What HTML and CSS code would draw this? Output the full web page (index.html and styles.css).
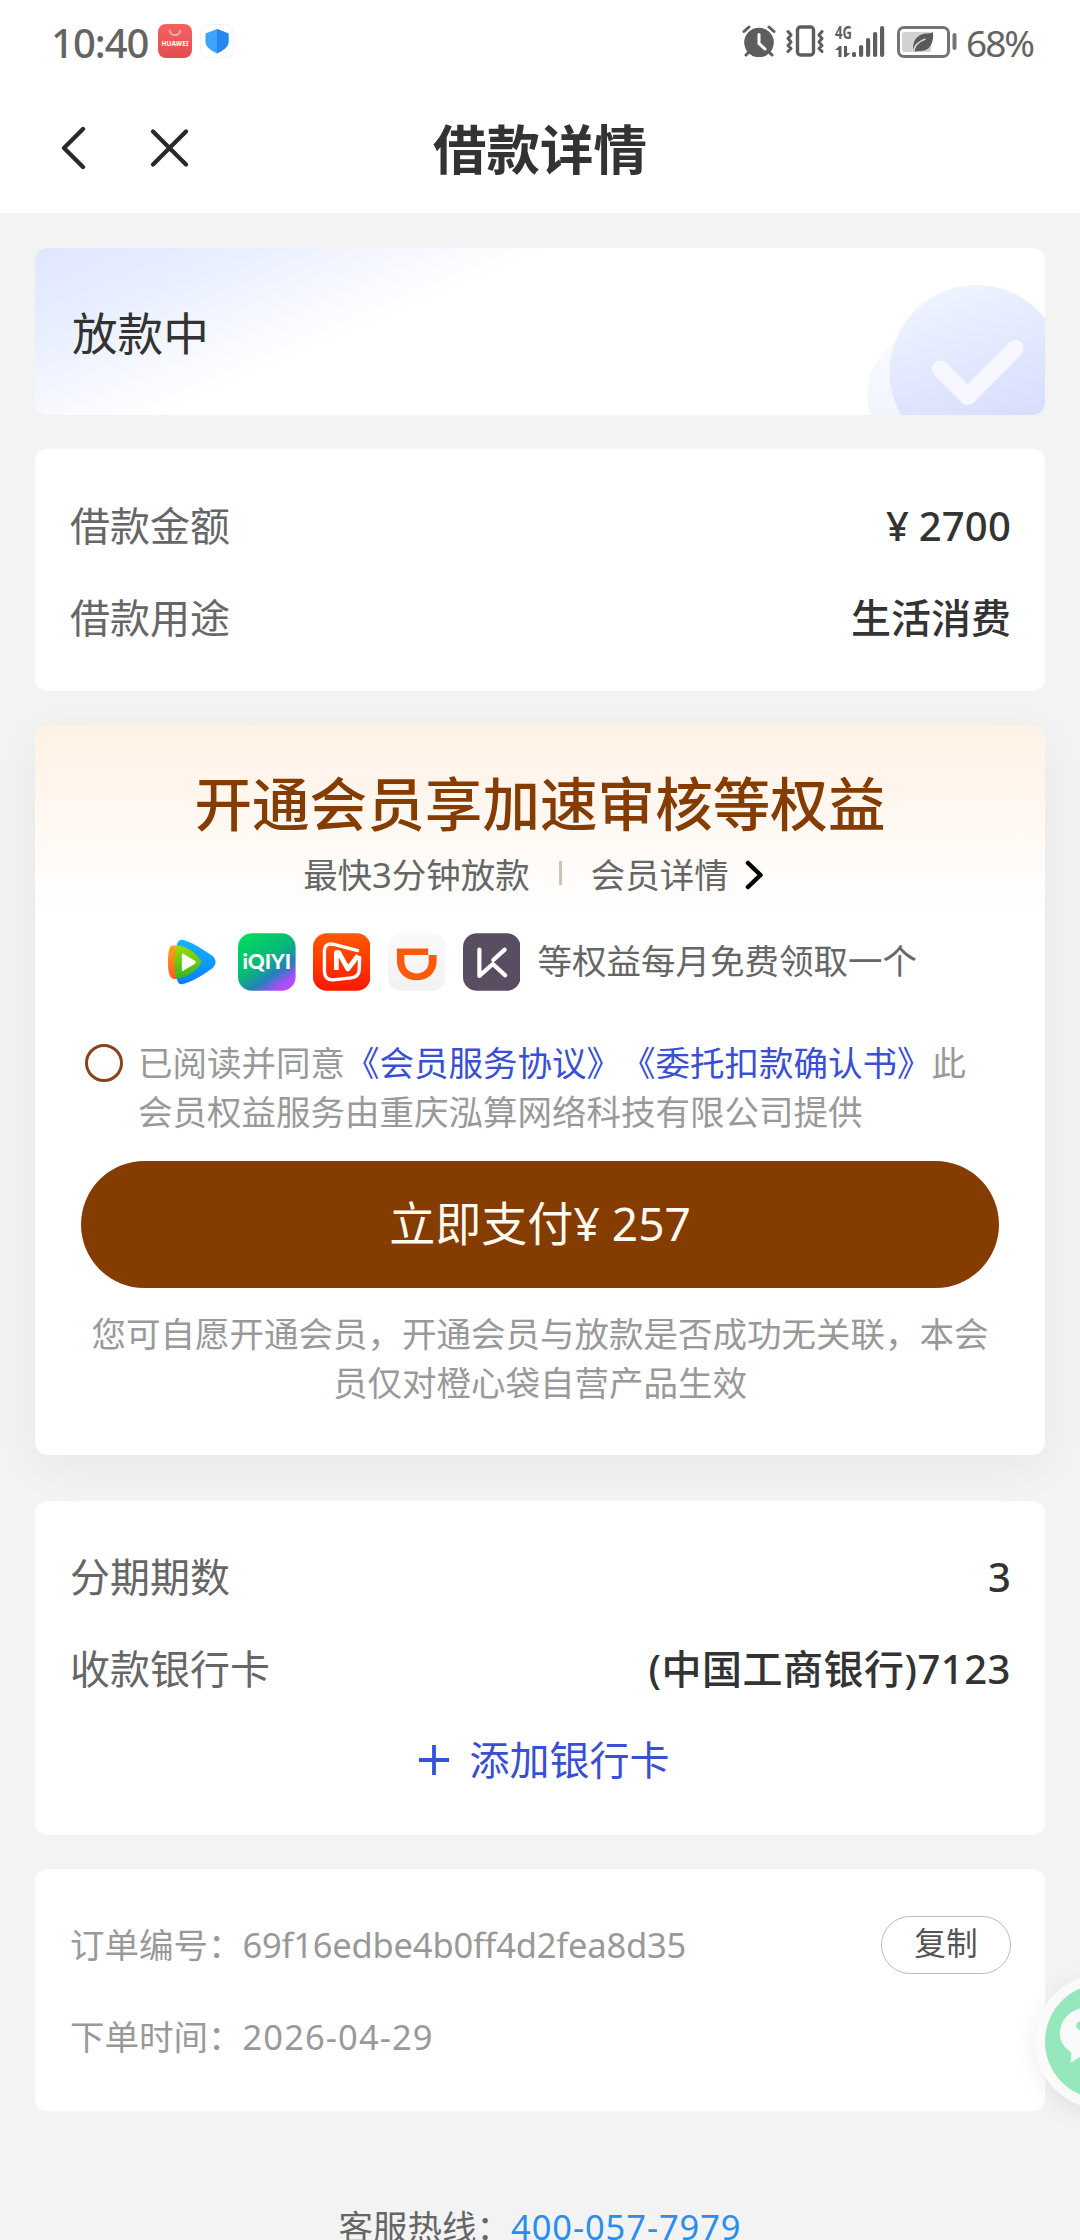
FILE: index.html
```html
<!DOCTYPE html>
<html lang="zh-CN">
<head>
<meta charset="utf-8">
<title>借款详情</title>
<link rel="stylesheet" href="styles.css">
</head>
<body>
<header class="header">
  <div class="status">
    <div class="status-left">
      <span class="time">10:40</span>
      <svg class="app-badge" viewBox="0 0 34 34">
        <defs><linearGradient id="hw" x1="0" y1="0" x2="0" y2="1"><stop offset="0" stop-color="#f4625f"/><stop offset="1" stop-color="#e54b50"/></linearGradient></defs>
        <rect width="34" height="34" rx="8" fill="url(#hw)"/>
        <path d="M11.5 6.5a5.6 5.6 0 0 0 11 0" fill="none" stroke="#fbb" stroke-width="1.4" stroke-linecap="round"/>
        <text class="badge-text" x="17" y="22" text-anchor="middle" textLength="27">HUAWEI</text>
      </svg>
      <svg class="app-badge" viewBox="0 0 34 34">
        <rect x=".5" y=".5" width="33" height="33" rx="8" fill="#fff" stroke="#f1f3f5"/>
        <path d="M17 5l11.500 4.500v8.500c0 5-5.500 8.500-11.500 11.500C11 26.500 5.500 23 5.500 18V9.500z" fill="#3da3fb"/>
        <path d="M17 5l11.500 4.500v8.500c0 5-5.500 8.500-11.500 11.500z" fill="#2687ee"/>
      </svg>
    </div>
    <div class="status-right">
      <svg class="i-alarm" viewBox="0 0 34 32" fill="none" stroke="#5e5e5e" stroke-width="3" stroke-linecap="round">
        <circle cx="17" cy="17.500" r="14.800" fill="#5e5e5e" stroke="none"/>
        <path d="M2 6.500l5-4.500M32 6.500L27 2M7 27l-3 3M27 27l3 3"/>
        <path d="M17 9.500v9l6 5.500" stroke="#fff"/>
      </svg>
      <svg class="i-vibrate" viewBox="0 0 38 32" fill="none" stroke="#5e5e5e" stroke-width="3.400" stroke-linecap="round" stroke-linejoin="round">
        <rect x="11.500" y="2" width="16" height="28" rx="3"/>
        <path d="M2 6.500l3 3.500-3 3.500 3 3.500-3 3.500 3 3-3 3M36 6.500l-3 3.500 3 3.500-3 3.500 3 3.500-3 3 3 3" stroke-width="3"/>
      </svg>
      <svg class="i-signal" viewBox="0 0 50 32" fill="#5e5e5e">
        <text class="net-text" x="0" y="14" textLength="17" lengthAdjust="spacingAndGlyphs">4G</text>
        <path d="M0 25l4.500-4h2v11h-3v-7zM9 21h3v7h3.500L11 32H9z"/>
        <rect x="17" y="27" width="4" height="5" rx="1.500"/><rect x="24" y="20" width="4.200" height="12" rx="2"/><rect x="31" y="13" width="4.200" height="19" rx="2"/><rect x="38" y="7" width="4.200" height="25" rx="2"/><rect x="45" y="1" width="4.200" height="31" rx="2"/>
      </svg>
      <svg class="i-battery" viewBox="0 0 60 32">
        <rect x="1.500" y="1.500" width="50" height="29" rx="5.500" fill="none" stroke="#747474" stroke-width="3"/>
        <rect x="5" y="6" width="29" height="20" rx="2" fill="#d2d2d2"/>
        <rect x="55.500" y="7" width="4" height="17" rx="2" fill="#747474"/>
        <path d="M36 6c1 10-3 19-12 19-3 0-5 .5-7 .5C14 15 21 8 29 7.500 32 7.500 34 7 36 6z" fill="#5a5a5a"/>
        <path d="M16.500 26c1-7 6-11 12-13" fill="none" stroke="#d8d8d8" stroke-width="1.700"/>
      </svg>
      <span class="percent">68%</span>
    </div>
  </div>
  <nav class="nav">
    <svg class="nav-icons" viewBox="0 0 130 44" fill="none" stroke="#292929" stroke-width="4.300" stroke-linecap="round" stroke-linejoin="round">
      <path d="M23 3L4 22l19 19"/><path d="M93 5.500l33 33M126 5.500l-33 33"/>
    </svg>
    <h1 class="nav-title">借款详情</h1>
  </nav>
</header>

<main class="main">
  <section class="card banner">
    <span class="banner-text">放款中</span>
    <svg class="banner-art" viewBox="830 0 180 167">
      <defs>
        <linearGradient id="big" x1=".3" y1="0" x2=".65" y2="1"><stop offset="0" stop-color="#eef4ff"/><stop offset=".8" stop-color="#d9defe"/></linearGradient>
        <linearGradient id="small" x1="0" y1="0" x2="0" y2="1"><stop offset="0" stop-color="#fafbff"/><stop offset="1" stop-color="#eef1ff"/></linearGradient>
      </defs>
      <circle cx="895" cy="147" r="63" fill="url(#small)"/>
      <circle cx="941.600" cy="124" r="87" fill="url(#big)"/>
      <path d="M905.500 121l27.200 27.500 47.500-48" fill="none" stroke="#f7f8ff" stroke-width="17" stroke-linecap="round" stroke-linejoin="round"/>
    </svg>
  </section>

  <section class="card rows">
    <div class="row"><span class="label">借款金额</span><span class="value amount">¥ 2700</span></div>
    <div class="row"><span class="label">借款用途</span><span class="value">生活消费</span></div>
  </section>

  <section class="card vip">
    <h2 class="vip-title">开通会员享加速审核等权益</h2>
    <div class="vip-sub">
      <span>最快3分钟放款</span>
      <i class="divider"></i>
      <span>会员详情</span>
      <svg class="chevron" viewBox="0 0 20 30"><path d="M3 3l12.500 12L3 27" fill="none" stroke="#000" stroke-width="4.500" stroke-linecap="round" stroke-linejoin="round"/></svg>
    </div>
    <div class="apps">
      <svg class="app" viewBox="0 0 58 58">
        <defs>
          <linearGradient id="vb" x1="0" y1="0" x2="0" y2="1"><stop offset="0" stop-color="#15b7ff"/><stop offset="1" stop-color="#0a7dff"/></linearGradient>
          <linearGradient id="vg" x1="0" y1="0" x2="0" y2="1"><stop offset="0" stop-color="#a0da00"/><stop offset="1" stop-color="#35b51c"/></linearGradient>
          <linearGradient id="vo" x1="0" y1="0" x2="0" y2="1"><stop offset="0" stop-color="#ffa51f"/><stop offset="1" stop-color="#ff5a1c"/></linearGradient>
        </defs>
        <path d="M9 12.500h8v33.500h-6c-5 0-6-9-6-17S6 13 9 12.500z" fill="url(#vo)"/>
        <path d="M14 12c1-6 5-6 9-4.500 9 3 18 9 27 15.500 4 4 4 8 0 12-9 7-18 12-27 15.500-4 1.500-8 1.500-9-4.500z" fill="url(#vb)"/>
        <path d="M13.500 12.500c8 0 16 5 23 12.500 2.500 2.500 2.500 5.500 0 8-7 7.500-15 12.500-23 12.500-2.500-8-2.500-25 0-33z" fill="url(#vg)"/>
        <path d="M19 21.500q0-1.500 1.500-.7l12 7.200q1.500 1.200 0 2.400l-12 7.500q-1.500.8-1.500-.7z" fill="#fff"/>
      </svg>
      <svg class="app" viewBox="0 0 58 58">
        <defs><linearGradient id="iq" x1=".2" y1="0" x2=".9" y2="1"><stop offset="0" stop-color="#00d95f"/><stop offset=".45" stop-color="#08b778"/><stop offset=".68" stop-color="#2580bb"/><stop offset=".85" stop-color="#a052f5"/><stop offset="1" stop-color="#c648ff"/></linearGradient></defs>
        <rect width="58" height="58" rx="14" fill="url(#iq)"/>
        <text class="iqiyi-text" x="4.500" y="36.500" textLength="49" lengthAdjust="spacingAndGlyphs">iQIYI</text>
      </svg>
      <svg class="app" viewBox="0 0 58 58">
        <defs><linearGradient id="mg" x1="0" y1="0" x2="0" y2="1"><stop offset="0" stop-color="#ff5a00"/><stop offset="1" stop-color="#ff1700"/></linearGradient></defs>
        <rect width="58" height="58" rx="14" fill="url(#mg)"/>
        <g fill="none" stroke="#fff" stroke-linecap="round" stroke-linejoin="round">
          <path d="M45 17.500L22 11.500q-10-2.500-10.500 6v21q.5 9 9 8.500l18-2q7.500-1 8-7.500l.5-13" stroke-width="3.400"/>
          <path d="M23.500 37V19.500h2.500L35 36l10.500-13.500" stroke-width="4.800" stroke-linecap="butt"/>
        </g>
      </svg>
      <svg class="app" viewBox="0 0 58 58">
        <defs><linearGradient id="dd" x1="0" y1="0" x2="0" y2="1"><stop offset="0" stop-color="#fafafa"/><stop offset="1" stop-color="#f1f1f1"/></linearGradient></defs>
        <rect width="58" height="58" rx="14" fill="url(#dd)"/>
        <path fill-rule="evenodd" d="M9 15.500h31.500v6.500h8.500v6c0 12-9 19.500-20 19.500S9 40 9 28zM16.500 22v6c0 8 6 12.500 12.500 12.500S41 36 41 29v-7z" fill="#fc5b0c"/>
      </svg>
      <svg class="app" viewBox="0 0 58 58">
        <rect width="58" height="58" rx="14" fill="#594d61"/>
        <path d="M16.500 16.500v26.500l13.500-12L42.500 42.500M42 16.500L30.500 27" fill="none" stroke="#fff" stroke-width="4.200" stroke-linecap="round" stroke-linejoin="round"/>
      </svg>
      <span class="apps-text">等权益每月免费领取一个</span>
    </div>
    <div class="agree">
      <i class="radio"></i>
      <p class="agree-text">已阅读并同意<a class="link">《会员服务协议》</a><a class="link">《委托扣款确认书》</a>此会员权益服务由重庆泓算网络科技有限公司提供</p>
    </div>
    <button class="pay">立即支付¥ 257</button>
    <p class="notice">您可自愿开通会员，开通会员与放款是否成功无关联，本会员仅对橙心袋自营产品生效</p>
  </section>

  <section class="card rows bank">
    <div class="row"><span class="label">分期期数</span><span class="value">3</span></div>
    <div class="row"><span class="label">收款银行卡</span><span class="value account">(中国工商银行)7123</span></div>
    <div class="row add">
      <svg class="plus" viewBox="0 0 32 32"><path d="M16 1v30M1 16h30" stroke="#3350e0" stroke-width="3.800"/></svg>
      <span>添加银行卡</span>
    </div>
  </section>

  <section class="card rows order">
    <div class="row"><span>订单编号：<span class="order-id">69f16edbe4b0ff4d2fea8d35</span></span><button class="copy">复制</button></div>
    <div class="row"><span>下单时间：<span class="date">2026-04-29</span></span></div>
  </section>

  <footer class="hotline">客服热线：<a class="phone">400-057-7979</a></footer>
</main>

<div class="float-layer">
  <div class="float">
    <svg class="float-icon" viewBox="0 0 116 116">
      <circle cx="58" cy="58" r="58" fill="#94e8bb"/>
      <path d="M46 23c-18 0-31 12-31 27 0 8 4.500 14.500 11.500 19l-.5 10.500 11-7c20 4 40-6 40-22.500S64 23 46 23z" fill="#f8faf9"/>
      <circle cx="36" cy="42" r="4.500" fill="#94e8bb"/><circle cx="57" cy="42" r="4.500" fill="#94e8bb"/>
    </svg>
  </div>
</div>
</body>
</html>
```

FILE: styles.css
```css
* { box-sizing: border-box; margin: 0; padding: 0; }

html { overflow: hidden; }

body {
  position: relative;
  width: 1080px;
  height: 2240px;
  overflow: hidden;
  background: #f3f3f3;
  color: #333;
  font-family: "Noto Sans", "Noto Sans CJK SC", sans-serif;
  font-size: 34.5px;
  text-spacing-trim: space-all;
}

svg { display: block; flex: none; }
button { font: inherit; border: 0; }

/* status bar and navigation */
.header { height: 213px; background: #fff; }
.status {
  display: flex;
  justify-content: space-between;
  height: 82px;
  padding: 0 46px 0 51px;
  color: #646464;
}
.status-left, .status-right { display: flex; align-items: center; }
.time { width: 107px; font-size: 40px; font-weight: 500; letter-spacing: -1px; line-height: 82px; padding-top: 3px; }
.app-badge { width: 34px; height: 34px; margin-right: 8px; }
.badge-text { font: 700 6.5px "Noto Sans", sans-serif; fill: #fff; }
.i-alarm { width: 34px; height: 32px; margin-right: 10px; }
.i-vibrate { width: 38px; height: 32px; margin-right: 11px; }
.i-signal { width: 50px; height: 32px; margin-right: 12px; }
.i-battery { width: 60px; height: 32px; margin: 2px 9px 0 0; }
.net-text { font: 700 18px "Noto Sans", sans-serif; }
.percent { width: 68px; font-size: 37px; letter-spacing: -2px; line-height: 82px; padding-top: 3px; }

.nav {
  display: grid;
  grid-template-columns: 1fr auto 1fr;
  align-items: center;
  height: 131px;
}
.nav-icons { width: 130px; height: 44px; margin-left: 60px; }
.nav-title { font-size: 53.5px; font-weight: 700; line-height: 80px; padding-top: 4px; }

/* page */
.main { display: flex; flex-direction: column; gap: 34px; padding: 35px 35px 0; }
.card { flex: none; border-radius: 12px; background: #fff; }

.banner {
  display: flex;
  align-items: center;
  justify-content: space-between;
  height: 167px;
  padding-left: 37px;
  overflow: hidden;
  background: linear-gradient(157deg, #dfe6ff 0, #e9efff 85px, #f8f9ff 155px, #fff 205px);
  font-size: 45.6px;
}
.banner-text { padding-bottom: 2px; }
.banner-art { width: 180px; height: 167px; }

.rows { padding: 31px 34px 27px 35px; font-size: 40px; }
.bank, .order { padding-top: 30px; padding-bottom: 28px; }
.row { display: flex; align-items: center; justify-content: space-between; height: 92px; line-height: 92px; }
.label { color: #666; }
.value { font-weight: 500; }
.amount { letter-spacing: 0.2px; word-spacing: -1px; }
.account { letter-spacing: 0.5px; }

/* membership */
.vip {
  height: 730px;
  padding: 39px 46px 48px;
  background: linear-gradient(#fff1e5 0, #fff 190px) #fff;
  box-shadow: 0 12px 46px rgba(20, 40, 80, 0.05);
  text-align: center;
}
.vip-title { font-size: 57.6px; font-weight: 500; line-height: 80px; color: #853c00; }
.vip-sub { display: flex; justify-content: center; align-items: center; height: 50px; margin-top: 4px; padding-right: 12px; color: #666; }
.divider { width: 3px; height: 24px; margin: 0 29px; background: #d3c0b0; }
.chevron { width: 20px; height: 30px; margin: 3px 0 0 16px; }
.apps { display: flex; justify-content: center; align-items: center; gap: 17.28px; height: 58px; margin-top: 35px; color: #666; }
.app { width: 57.6px; height: 58px; }
.iqiyi-text { font: 900 20px Lato, sans-serif; fill: #fff; }
.apps-text { padding-bottom: 6px; }
.agree { display: flex; gap: 15px; margin-top: 47px; padding-left: 4px; line-height: 49px; color: #999; text-align: left; }
.radio { flex: none; width: 38px; height: 38px; margin-top: 6px; border: 3px solid #8a441c; border-radius: 50%; }
.agree-text { width: 850px; }
.link { color: #3a4fd2; }
.pay {
  display: block;
  width: 918px;
  height: 127px;
  margin-top: 25px;
  padding-bottom: 6px;
  border-radius: 64px;
  background: #853c00;
  color: #fffaf0;
  font-size: 46.08px;
}
.notice { margin-top: 21px; line-height: 49px; color: #999; }

.main .bank { margin-top: 12px; }
.add { justify-content: center; gap: 20px; padding: 0 0 3px 6px; line-height: 88px; color: #3a4fd2; }
.plus { width: 32px; height: 32px; }

.order { color: #999; font-size: 34.5px; }
.order-id { letter-spacing: -0.2px; }
.date { letter-spacing: 1.1px; }
.copy {
  width: 130px;
  height: 58px;
  padding-bottom: 4px;
  border: 1.5px solid #bbb;
  border-radius: 29px;
  background: none;
  color: #555;
  font-size: 31.68px;
  line-height: 50px;
}

.hotline { margin-top: 57px; line-height: 50px; text-align: center; color: #666; }
.phone { color: #2a8df0; letter-spacing: 0.9px; }

/* customer service button docked past the right edge */
.float-layer {
  position: absolute;
  right: 0;
  top: 1930px;
  width: 90px;
  height: 230px;
  overflow: hidden;
  padding: 44px 0 0 45px;
}
.float {
  width: 135px;
  height: 135px;
  padding: 10px;
  border-radius: 50%;
  background: rgba(250, 250, 250, 0.95);
  box-shadow: 0 6px 24px rgba(0, 0, 0, 0.08);
}
.float-icon { width: 115px; height: 115px; }
```
